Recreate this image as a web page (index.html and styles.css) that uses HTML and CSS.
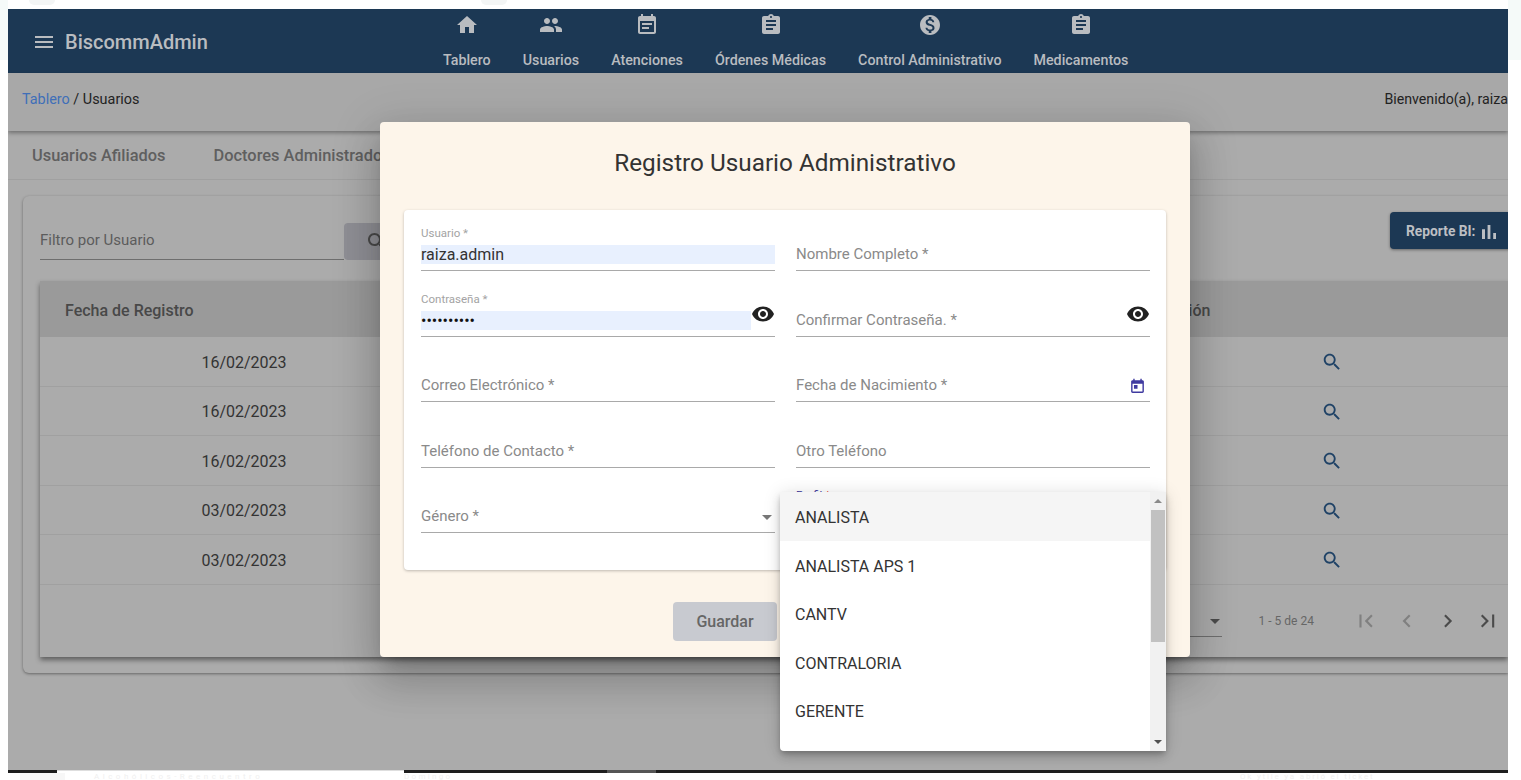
FILE: index.html
```html
<!doctype html>
<html>
  <head>
    <meta charset="utf-8">
    <title>BiscommAdmin</title>
    <link rel="stylesheet" href="styles.css">
  </head>
  <body>
    <!-- icon set, material paths -->
    <svg class="defs" width="0" height="0">
      <symbol id="i-menu" viewBox="0 0 24 24"><path d="M3 18h18v-2H3v2zm0-5h18v-2H3v2zm0-7v2h18V6H3z"/></symbol>
      <symbol id="i-home" viewBox="0 0 24 24"><path d="M10 20v-6h4v6h5v-8h3L12 3 2 12h3v8z"/></symbol>
      <symbol id="i-people" viewBox="0 0 24 24"><path d="M16 11c1.66 0 2.99-1.34 2.99-3S17.66 5 16 5c-1.66 0-3 1.34-3 3s1.34 3 3 3zm-8 0c1.66 0 2.99-1.34 2.99-3S9.66 5 8 5C6.34 5 5 6.34 5 8s1.34 3 3 3zm0 2c-2.33 0-7 1.17-7 3.5V19h14v-2.5c0-2.33-4.67-3.5-7-3.5zm8 0c-.29 0-.62.02-.97.05 1.16.84 1.97 1.97 1.97 3.45V19h6v-2.5c0-2.33-4.67-3.5-7-3.5z"/></symbol>
      <symbol id="i-note" viewBox="0 0 24 24"><path d="M17 10H7v2h10v-2zm2-7h-1V1h-2v2H8V1H6v2H5c-1.11 0-1.99.9-1.99 2L3 19c0 1.1.89 2 2 2h14c1.1 0 2-.9 2-2V5c0-1.1-.9-2-2-2zm0 16H5V8h14v11zm-5-5H7v2h7v-2z"/></symbol>
      <symbol id="i-assign" viewBox="0 0 24 24"><path d="M19 3h-4.18C14.4 1.84 13.3 1 12 1c-1.3 0-2.4.84-2.82 2H5c-1.1 0-2 .9-2 2v14c0 1.1.9 2 2 2h14c1.1 0 2-.9 2-2V5c0-1.1-.9-2-2-2zm-7 0c.55 0 1 .45 1 1s-.45 1-1 1-1-.45-1-1 .45-1 1-1zm2 14H7v-2h7v2zm3-4H7v-2h10v2zm0-4H7V7h10v2z"/></symbol>
      <symbol id="i-money" viewBox="0 0 24 24"><path d="M12 2C6.48 2 2 6.48 2 12s4.48 10 10 10 10-4.48 10-10S17.52 2 12 2zm1.41 16.09V20h-2.67v-1.93c-1.71-.36-3.16-1.46-3.27-3.4h1.96c.1 1.05.82 1.87 2.65 1.87 1.96 0 2.4-.98 2.4-1.59 0-.83-.44-1.61-2.67-2.14-2.48-.6-4.18-1.62-4.18-3.67 0-1.72 1.39-2.84 3.11-3.21V4h2.67v1.95c1.86.45 2.79 1.86 2.85 3.39H14.3c-.05-1.11-.64-1.87-2.22-1.87-1.5 0-2.4.68-2.4 1.64 0 .84.65 1.39 2.67 1.91s4.18 1.39 4.18 3.91c-.01 1.83-1.38 2.83-3.12 3.16z"/></symbol>
      <symbol id="i-eye" viewBox="0 0 24 24"><path d="M12 4.5C7 4.5 2.73 7.61 1 12c1.73 4.39 6 7.5 11 7.5s9.27-3.11 11-7.5c-1.73-4.39-6-7.5-11-7.5zM12 17c-2.76 0-5-2.24-5-5s2.24-5 5-5 5 2.24 5 5-2.24 5-5 5zm0-8c-1.66 0-3 1.34-3 3s1.34 3 3 3 3-1.34 3-3-1.34-3-3-3z"/></symbol>
      <symbol id="i-today" viewBox="0 0 24 24"><path d="M19 3h-1V1h-2v2H8V1H6v2H5c-1.11 0-1.99.9-1.99 2L3 19c0 1.1.89 2 2 2h14c1.1 0 2-.9 2-2V5c0-1.1-.9-2-2-2zm0 16H5V8h14v11zM7 10h5v5H7z"/></symbol>
      <symbol id="i-search" viewBox="0 0 24 24"><path d="M15.5 14h-.79l-.28-.27C15.41 12.59 16 11.11 16 9.5 16 5.91 13.09 3 9.5 3S3 5.91 3 9.5 5.91 16 9.5 16c1.61 0 3.09-.59 4.23-1.57l.27.28v.79l5 4.99L20.49 19l-4.99-5zm-6 0C7.01 14 5 11.99 5 9.5S7.01 5 9.5 5 14 7.01 14 9.5 11.99 14 9.5 14z"/></symbol>
      <symbol id="i-first" viewBox="0 0 24 24"><path d="M18.41 16.59L13.82 12l4.59-4.59L17 6l-6 6 6 6zM6 6h2v12H6z"/></symbol>
      <symbol id="i-prev" viewBox="0 0 24 24"><path d="M15.41 7.41L14 6l-6 6 6 6 1.41-1.41L10.83 12z"/></symbol>
      <symbol id="i-next" viewBox="0 0 24 24"><path d="M10 6L8.59 7.41 13.17 12l-4.58 4.59L10 18l6-6z"/></symbol>
      <symbol id="i-last" viewBox="0 0 24 24"><path d="M5.59 7.41L10.18 12l-4.59 4.59L7 18l6-6-6-6zM16 6h2v12h-2z"/></symbol>
      <symbol id="i-chart" viewBox="0 0 24 24"><path d="M5 9.2h3V19H5zM10.6 5h2.8v14h-2.8zm5.6 8H19v6h-2.8z"/></symbol>
    </svg>

    <!-- bits of the page behind the captured window -->
    <div class="edge-top">
      <span class="edge-dot"></span>
      <span class="edge-dot"></span>
    </div>

    <div class="app">
      <header class="toolbar">
        <div class="brand">
          <svg class="icon brand-icon"><use href="#i-menu"/></svg>
          <span>BiscommAdmin</span>
        </div>
        <nav class="nav">
          <a class="nav-item"><svg class="icon"><use href="#i-home"/></svg><span>Tablero</span></a>
          <a class="nav-item"><svg class="icon"><use href="#i-people"/></svg><span>Usuarios</span></a>
          <a class="nav-item"><svg class="icon"><use href="#i-note"/></svg><span>Atenciones</span></a>
          <a class="nav-item"><svg class="icon"><use href="#i-assign"/></svg><span>Órdenes Médicas</span></a>
          <a class="nav-item"><svg class="icon"><use href="#i-money"/></svg><span>Control Administrativo</span></a>
          <a class="nav-item"><svg class="icon"><use href="#i-assign"/></svg><span>Medicamentos</span></a>
        </nav>
      </header>

      <div class="crumbs">
        <div><a class="crumb-link">Tablero</a> / Usuarios</div>
        <div class="welcome">Bienvenido(a), raiza</div>
      </div>

      <div class="tabs">
        <div class="tab">Usuarios Afiliados</div>
        <div class="tab">Doctores Administradores</div>
      </div>

      <section class="card">
        <div class="filter-row">
          <div class="filter-input">Filtro por Usuario</div>
          <button class="filter-btn"><svg class="icon"><use href="#i-search"/></svg></button>
          <button class="report-btn">Reporte BI: <svg class="icon"><use href="#i-chart"/></svg></button>
        </div>

        <div class="table">
          <div class="row head">
            <div class="col-date">Fecha de Registro</div>
            <div class="col-action">Acción</div>
          </div>
          <div class="row">
            <div class="col-date">16/02/2023</div>
            <div class="col-action"><svg class="icon"><use href="#i-search"/></svg></div>
          </div>
          <div class="row">
            <div class="col-date">16/02/2023</div>
            <div class="col-action"><svg class="icon"><use href="#i-search"/></svg></div>
          </div>
          <div class="row">
            <div class="col-date">16/02/2023</div>
            <div class="col-action"><svg class="icon"><use href="#i-search"/></svg></div>
          </div>
          <div class="row">
            <div class="col-date">03/02/2023</div>
            <div class="col-action"><svg class="icon"><use href="#i-search"/></svg></div>
          </div>
          <div class="row">
            <div class="col-date">03/02/2023</div>
            <div class="col-action"><svg class="icon"><use href="#i-search"/></svg></div>
          </div>
          <div class="pager">
            <div class="pager-size"><span class="arrow-down"></span></div>
            <div class="pager-range">1 - 5 de 24</div>
            <svg class="icon off"><use href="#i-first"/></svg>
            <svg class="icon off"><use href="#i-prev"/></svg>
            <svg class="icon"><use href="#i-next"/></svg>
            <svg class="icon"><use href="#i-last"/></svg>
          </div>
        </div>
      </section>

      <!-- Modal -->
      <div class="modal">
        <h2 class="modal-title">Registro Usuario Administrativo</h2>
        <form class="form-card">
          <div class="field">
            <div class="field-main">
              <label class="float">Usuario *</label>
              <div class="value autofill">raiza.admin</div>
            </div>
          </div>
          <div class="field">
            <div class="field-main"><div class="hint">Nombre Completo *</div></div>
          </div>
          <div class="field">
            <div class="field-main">
              <label class="float">Contraseña *</label>
              <div class="value autofill dots">••••••••••</div>
            </div>
            <svg class="icon eye"><use href="#i-eye"/></svg>
          </div>
          <div class="field">
            <div class="field-main"><div class="hint">Confirmar Contraseña. *</div></div>
            <svg class="icon eye"><use href="#i-eye"/></svg>
          </div>
          <div class="field">
            <div class="field-main"><div class="hint">Correo Electrónico *</div></div>
          </div>
          <div class="field">
            <div class="field-main"><div class="hint">Fecha de Nacimiento *</div></div>
            <svg class="icon cal"><use href="#i-today"/></svg>
          </div>
          <div class="field">
            <div class="field-main"><div class="hint">Teléfono de Contacto *</div></div>
          </div>
          <div class="field">
            <div class="field-main"><div class="hint">Otro Teléfono</div></div>
          </div>
          <div class="field">
            <div class="field-main"><div class="hint">Género *</div></div>
            <span class="arrow-down"></span>
          </div>
          <div class="field">
            <div class="field-main">
              <label class="float focus">Perfil <b>*</b></label>
              <div class="value">&nbsp;</div>
            </div>
          </div>
        </form>
        <div class="modal-actions">
          <button class="save-btn">Guardar</button>
        </div>
      </div>

      <!-- Perfil dropdown -->
      <div class="dropdown">
        <ul class="options">
          <li class="active">ANALISTA</li>
          <li>ANALISTA APS 1</li>
          <li>CANTV</li>
          <li>CONTRALORIA</li>
          <li>GERENTE</li>
        </ul>
        <div class="scrollbar">
          <span class="sb-up"></span>
          <div class="sb-track"><div class="sb-thumb"></div></div>
          <span class="sb-down"></span>
        </div>
      </div>
    </div>

    <div class="taskbar">
      <div class="band">
        <div class="band-dark short"></div>
        <div class="band-light"></div>
        <div class="band-dark mid"></div>
        <div class="band-grey"></div>
        <div class="band-dark long"></div>
      </div>
      <div class="ghost">
        <span class="ghost-icon"></span>
        <span class="ghost-title">Alcohólicos-Reencuentro</span>
        <span class="ghost-day">Domingo</span>
        <span class="ghost-msg">Ok ytile ya abrió el ticket</span>
      </div>
    </div>
  </body>
</html>
```

FILE: styles.css
```css
* {
  box-sizing: border-box;
}
html, body {
  margin: 0;
  height: 100%;
  overflow: hidden;
}
body {
  background:
    linear-gradient(#f5faf9, #f5faf9) left top / 8px 60px no-repeat,
    linear-gradient(#f5faf9, #f5faf9) right top / 13px 60px no-repeat,
    white;
  font-family: Roboto, "Liberation Sans", sans-serif;
  color: #333;
  padding: 0 13px 0 8px;
}
.defs {
  display: block;
  position: absolute;
}
.icon {
  width: 24px;
  height: 24px;
  fill: currentColor;
  display: block;
}

.edge-top {
  height: 9px;
  display: flex;
  gap: 426px;
  padding-left: 21px;
}
.edge-dot {
  width: 26px;
  height: 5px;
  background-color: #f3f5f5;
  border-radius: 0 0 13px 13px;
}

.app {
  position: relative;
  height: 761px;
  background-color: #ababab;
  overflow: hidden;
}

.toolbar {
  height: 64px;
  background-color: #1c3854;
  color: #b9bcc0;
  display: flex;
}
.brand {
  width: 419px;
  padding: 2px 0 0 24px;
  display: flex;
  align-items: center;
  gap: 9px;
  font-size: 20px;
  font-weight: 500;
}
.nav {
  display: flex;
}
.nav-item {
  padding: 4px 16px 0 16px;
  display: flex;
  flex-direction: column;
  align-items: center;
  gap: 15px;
  font-size: 14.28px;
  font-weight: 500;
  white-space: nowrap;
}

.crumbs {
  height: 58px;
  padding: 18px 0 0 14px;
  display: flex;
  justify-content: space-between;
  font-size: 14.4px;
  color: #222;
  background-color: #a8a8a8;
  box-shadow: 0 2px 4px rgba(0,0,0,0.35);
  position: relative;
}
.crumb-link {
  color: #3f6fb8;
}
.welcome {
  white-space: nowrap;
  font-size: 14.2px;
}

.tabs {
  height: 49px;
  display: flex;
  border-bottom: 1px solid #a0a0a0;
}
.tab {
  padding: 15px 24px 0 24px;
  font-size: 16.4px;
  font-weight: 500;
  color: #5f5f5f;
  white-space: nowrap;
}

.card {
  margin: 16px 0 0 15px;
  height: 477px;
  padding: 16px 0 0 17px;
  border-radius: 6px 0 0 6px;
  box-shadow: 0 1px 3px rgba(0,0,0,0.4);
}
.filter-row {
  display: flex;
  height: 69px;
  position: relative;
}
.filter-input {
  width: 304px;
  height: 48px;
  padding-top: 19px;
  font-size: 15px;
  color: #5c5c5c;
  border-bottom: 1px solid #6e6e6e;
}
.filter-btn {
  width: 56px;
  height: 37px;
  margin-top: 11px;
  border: 0;
  border-radius: 4px;
  background-color: #8f8f95;
  color: #4a4a4a;
  padding: 0 0 0 21px;
}
.report-btn {
  position: absolute;
  left: 1350px;
  top: 0;
  width: 130px;
  height: 37px;
  border: 0;
  border-radius: 4px;
  background-color: #1c3854;
  color: #bcbfc3;
  font-family: inherit;
  font-size: 13.8px;
  font-weight: 700;
  display: flex;
  align-items: center;
  padding: 0 0 0 16px;
  gap: 1px;
  box-shadow: 0 1px 3px rgba(0,0,0,0.4);
}
.report-btn .icon {
  margin-top: 3px;
}

.table {
  box-shadow: 0 3px 5px rgba(0,0,0,0.45);
}
.row {
  display: flex;
  height: 49.5px;
  padding-top: 2px;
  align-items: center;
  border-bottom: 1px solid #a0a0a0;
  font-size: 16px;
  color: #333;
}
.row .icon {
  width: 22px;
  height: 22px;
}
.row.head {
  height: 56px;
  background-color: #9a9a9a;
  border-bottom: 0;
  color: #484848;
  font-weight: 500;
}
.col-date {
  width: 408px;
  text-align: center;
}
.head .col-date {
  text-align: left;
  padding-left: 25px;
}
.col-action {
  margin-left: auto;
  width: 352px;
  color: #1f4266;
  display: flex;
  justify-content: center;
}
.head .col-action {
  justify-content: flex-start;
  padding-left: 5px;
  color: #484848;
}
.pager {
  height: 72.5px;
  display: flex;
  align-items: center;
  color: #4b4b4b;
  padding-left: 1150px;
}
.pager-size {
  width: 32px;
  height: 29px;
  border-bottom: 1px solid #6e6e6e;
  display: flex;
  justify-content: flex-end;
  align-items: center;
  padding-right: 2px;
  margin-top: 3px;
}
.pager-range {
  width: 125px;
  padding-left: 37px;
  font-size: 12px;
  color: #666;
  white-space: nowrap;
}
.pager .icon {
  width: 26px;
  height: 26px;
  margin: 0 7px 0 8px;
}
.pager .icon.off {
  color: #808080;
}
.arrow-down {
  width: 0;
  height: 0;
  border-left: 5px solid transparent;
  border-right: 5px solid transparent;
  border-top: 5px solid currentColor;
}

.modal {
  position: absolute;
  left: 372px;
  top: 113px;
  width: 810px;
  height: 535px;
  background-color: #fdf5ea;
  border-radius: 4px;
  padding: 24px;
  box-shadow: 0 11px 15px -7px rgba(0,0,0,0.2), 0 24px 38px 3px rgba(0,0,0,0.14), 0 9px 46px 8px rgba(0,0,0,0.12);
}
.modal-title {
  margin: 0;
  height: 64px;
  padding-top: 1px;
  text-align: center;
  font-size: 24.3px;
  line-height: 32px;
  font-weight: 400;
  color: #333;
}
.form-card {
  height: 360px;
  background-color: white;
  border-radius: 4px;
  padding: 7px 16px 0 17px;
  display: grid;
  grid-template-columns: 354px 354px;
  grid-auto-rows: 54px;
  column-gap: 21px;
  row-gap: 11.5px;
  box-shadow: 0 1px 3px rgba(0,0,0,0.25);
}
.field {
  display: flex;
  align-items: flex-end;
  border-bottom: 1px solid #a9a9a9;
  padding-bottom: 6px;
}
.field-main {
  flex: 1;
}
.float {
  display: block;
  font-size: 11.5px;
  line-height: 12px;
  color: #a3a3a3;
  margin-bottom: 6px;
}
.float.focus {
  color: #3f3aa0;
}
.float.focus b {
  color: #e53935;
  font-weight: 400;
}
.value {
  height: 19px;
  line-height: 19px;
  font-size: 16px;
  color: #333;
}
.autofill {
  background-color: #e8f0fe;
}
.dots {
  color: #111;
}
.hint {
  height: 20px;
  line-height: 20px;
  font-size: 15px;
  color: #8a8a8a;
}
.eye {
  color: #222;
  margin-bottom: 4px;
}
.cal {
  width: 17px;
  height: 17px;
  color: #3f3aa0;
  margin-right: 4px;
}
.field .arrow-down {
  color: #777;
  margin: 0 3px 6px 0;
}
.modal-actions {
  padding: 32px 0 0 269px;
}
.save-btn {
  width: 104px;
  height: 39px;
  border: 0;
  border-radius: 4px;
  background-color: #c8cad0;
  color: #666;
  font-family: inherit;
  font-size: 16px;
  font-weight: 500;
}

.dropdown {
  position: absolute;
  left: 772px;
  top: 483px;
  width: 386px;
  height: 259px;
  display: flex;
  background-color: white;
  border-radius: 0 0 4px 4px;
  box-shadow: 0 3px 5px -1px rgba(0,0,0,0.2), 0 6px 10px rgba(0,0,0,0.14), 0 1px 18px rgba(0,0,0,0.12);
}
.options {
  list-style: none;
  margin: 0;
  padding: 0;
  flex: 1;
}
.options li {
  height: 48.5px;
  line-height: 51px;
  padding-left: 15px;
  font-size: 16px;
  color: #333;
}
.options li.active {
  background-color: #f5f5f5;
}
.scrollbar {
  width: 16px;
  background-color: #f1f1f1;
  display: flex;
  flex-direction: column;
  align-items: center;
  justify-content: space-between;
}
.sb-up, .sb-down {
  width: 0;
  height: 0;
  border-left: 4px solid transparent;
  border-right: 4px solid transparent;
  margin: 7px 0;
}
.sb-up {
  border-bottom: 4px solid #8a8a8a;
}
.sb-down {
  border-top: 4px solid #505050;
}
.sb-track {
  flex: 1;
  width: 100%;
  padding: 0 1px;
}
.sb-thumb {
  height: 132px;
  background-color: #c1c1c1;
}

/* strip of the window underneath */
.taskbar {
  height: 10px;
}
.band {
  display: flex;
  height: 3px;
}
.band-dark {
  background-color: #1e1e1e;
}
.short {
  width: 49px;
}
.band-light {
  width: 347px;
  border-top: 1px solid #dedede;
}
.mid {
  width: 203px;
}
.band-grey {
  width: 49px;
  background-color: #555;
}
.long {
  flex: 1;
}
.ghost {
  display: flex;
  height: 7px;
  font-size: 8px;
  line-height: 7px;
  color: #f0f0f0;
  white-space: nowrap;
}
.ghost-icon {
  width: 45px;
  margin: 0 29px 0 12px;
  background-color: #f7f7f7;
}
.ghost-title {
  width: 310px;
  letter-spacing: 3.5px;
}
.ghost-day {
  width: 836px;
  letter-spacing: 2.3px;
}
.ghost-msg {
  letter-spacing: 1.8px;
}
```
